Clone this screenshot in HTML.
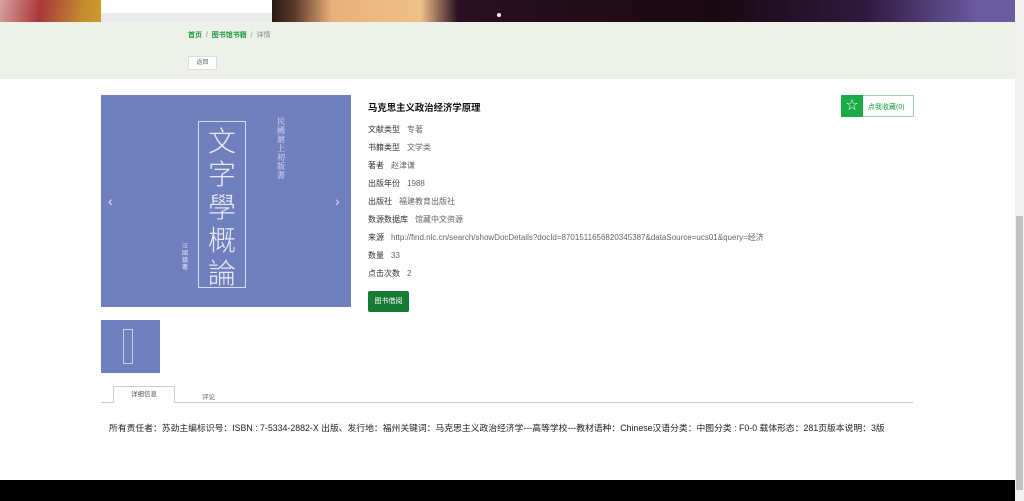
<!DOCTYPE html>
<html><head><meta charset="utf-8"><style>
*{margin:0;padding:0;box-sizing:border-box}
body{width:1024px;height:501px;overflow:hidden;background:#fff;font-family:"Liberation Sans","Noto Sans CJK SC",sans-serif;position:relative;color:#333}
.a{position:absolute}
.lbl{font-size:8px;color:#333;white-space:nowrap}
.lbl span{color:#666;margin-left:7px}
</style></head><body>
<div class="a" style="left:0;top:0;width:101px;height:22px;background:linear-gradient(100deg,#d8a0a0,#a83838 40%,#c48a30 80%,#d09a2a)"></div>
<div class="a" style="left:101px;top:0;width:171px;height:22px;background:#fff"></div>
<div class="a" style="left:101px;top:13px;width:171px;height:9px;background:#ebebeb"></div>
<div class="a" style="left:272px;top:0;width:743px;height:22px;background:linear-gradient(90deg,#2a1a18 0%,#5a3a28 3%,#e8b07a 8%,#f0c08a 20%,#2a1020 25%,#1a0810 60%,#301a40 80%,#6a5aa0 95%)"></div>
<div class="a" style="left:497px;top:13px;width:4px;height:4px;border-radius:50%;background:#fff"></div>
<div class="a" style="left:0;top:22px;width:1015px;height:57px;background:#edf1ea"></div>
<div class="a" style="left:188px;top:30px;font-size:7px;color:#888"><span style="color:#1a9a40;font-weight:bold">首页</span> &nbsp;/&nbsp; <span style="color:#1a9a40;font-weight:bold">图书馆书籍</span> &nbsp;/&nbsp; 详情</div>
<div class="a" style="left:188px;top:56px;width:29px;height:14px;background:#fff;border:1px solid #ddd;font-size:6px;color:#666;text-align:center;line-height:12px">返回</div>
<div class="a" style="left:101px;top:95px;width:250px;height:212px;background:#7080be"></div>
<div class="a" style="left:198px;top:121px;width:48px;height:167px;border:1px solid #d8dcf0"></div>
<div class="a" style="left:203px;top:124px;font-size:28px;line-height:33px;color:#e8ecf8;width:38px;text-align:center;font-family:'Noto Sans CJK SC',sans-serif;font-weight:300">文<br>字<br>學<br>概<br>論</div>
<div class="a" style="left:277px;top:117px;font-size:8px;line-height:9px;color:#e0e4f4;width:9px;font-family:'Noto Serif CJK SC',serif">民國滬上初版書</div>
<div class="a" style="left:182px;top:244px;font-size:6px;line-height:7px;color:#e0e4f4;width:7px">汪國鎮著</div>
<div class="a" style="left:108px;top:193px;color:#dfe3f5;font-size:14px">‹</div>
<div class="a" style="left:335px;top:193px;color:#dfe3f5;font-size:14px">›</div>
<div class="a" style="left:101px;top:320px;width:59px;height:53px;background:#7080be"></div>
<div class="a" style="left:123px;top:329px;width:10px;height:35px;border:1px solid #c8cdea"></div>
<div class="a" style="left:368px;top:100px;font-size:9.4px;font-weight:bold;color:#111">马克思主义政治经济学原理</div>
<div class="a lbl" style="left:368px;top:124px">文献类型<span>专著</span></div>
<div class="a lbl" style="left:368px;top:142px">书籍类型<span>文学类</span></div>
<div class="a lbl" style="left:368px;top:160px">著者<span>赵津谦</span></div>
<div class="a lbl" style="left:368px;top:178px">出版年份<span>1988</span></div>
<div class="a lbl" style="left:368px;top:196px">出版社<span>福建教育出版社</span></div>
<div class="a lbl" style="left:368px;top:214px">数源数据库<span>馆藏中文资源</span></div>
<div class="a lbl" style="left:368px;top:232px">来源<span>http://find.nlc.cn/search/showDocDetails?docId=8701511656820345387&amp;dataSource=ucs01&amp;query=经济</span></div>
<div class="a lbl" style="left:368px;top:250px">数量<span>33</span></div>
<div class="a lbl" style="left:368px;top:268px">点击次数<span>2</span></div>
<div class="a" style="left:368px;top:291px;width:41px;height:21px;background:#177a35;border-radius:2px;color:#fff;font-size:7px;text-align:center;line-height:21px">图书借阅</div>
<div class="a" style="left:841px;top:95px;width:73px;height:22px;border:1px solid #9ed4ae;background:#fff"></div>
<div class="a" style="left:841px;top:95px;width:22px;height:22px;background:#1aaa48;color:#fff;font-size:12px;text-align:center;line-height:21px">☆</div>
<div class="a" style="left:868px;top:102px;font-size:7px;color:#1a9a40">点我收藏(0)</div>
<div class="a" style="left:101px;top:402px;width:812px;height:1px;background:#ccc"></div>
<div class="a" style="left:113px;top:386px;width:62px;height:17px;border:1px solid #ccc;border-bottom:1px solid #fff;background:#fff;font-size:6.5px;color:#555;text-align:center;line-height:15px">详细信息</div>
<div class="a" style="left:202px;top:391px;font-size:6.5px;color:#666">评论</div>
<div class="a" style="left:109px;top:421px;font-size:8.8px;color:#222;white-space:nowrap">所有责任者：苏劲主编标识号：ISBN : 7-5334-2882-X 出版、发行地：福州关键词：马克思主义政治经济学---高等学校---教材语种：Chinese汉语分类：中图分类 : F0-0 载体形态：281页版本说明：3版</div>
<div class="a" style="left:0;top:480px;width:1015px;height:21px;background:#000"></div>
<div class="a" style="left:1015px;top:0;width:9px;height:501px;background:#f1f1f1"></div>
<div class="a" style="left:1016px;top:216px;width:7px;height:274px;background:#c1c1c1"></div>
</body></html>
